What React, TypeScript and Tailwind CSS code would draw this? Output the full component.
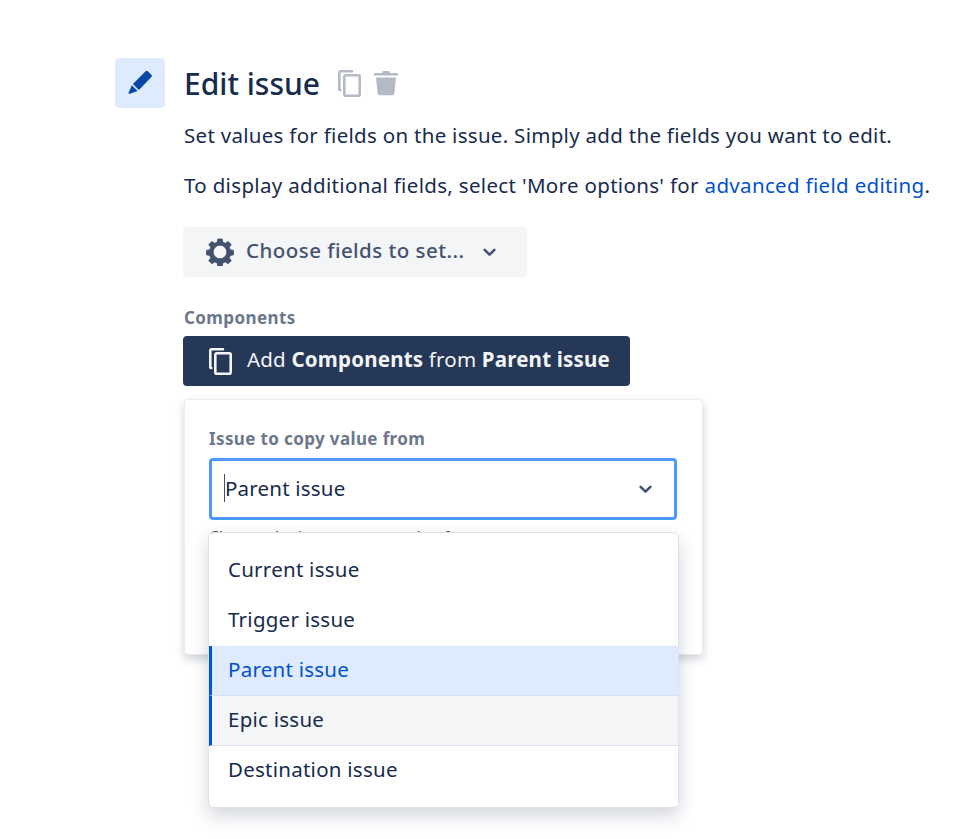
import React from "react";

const font = "font-['Noto_Sans',sans-serif]";

function CopyIcon({ className }: { className: string }) {
  return (
    <svg viewBox="0 0 23 27" className={className} fill="none" stroke="currentColor" strokeWidth="2.6">
      <path d="M2.300 20 a1 1 0 0 1 -1 -1 V2.500 a1.200 1.200 0 0 1 1.200 -1.200 H14" strokeLinecap="round" />
      <rect x="6.300" y="5.300" width="15.400" height="20.400" rx="1.500" />
    </svg>
  );
}

function Chevron({ className }: { className: string }) {
  return (
    <svg viewBox="0 0 12 8" className={className} fill="none" stroke="currentColor" strokeWidth="2.300" strokeLinecap="round" strokeLinejoin="round">
      <path d="M1.500 1.500 6 6l4.500-4.500" />
    </svg>
  );
}

function Gear({ className }: { className: string }) {
  return (
    <svg viewBox="0 0 28 28" className={className} fill="currentColor" stroke="currentColor" strokeWidth="0.8" strokeLinejoin="round">
      <path
        fillRule="evenodd"
        d="M11.800 1h4.400l0.700 3.300 2.400 1 2.800-1.900 3.100 3.100-1.900 2.800 1 2.400 3.300 0.700v4.400l-3.300 0.700-1 2.400 1.900 2.800-3.100 3.100-2.800-1.900-2.400 1-0.700 3.300h-4.400l-0.700-3.300-2.400-1-2.800 1.900-3.100-3.100 1.900-2.800-1-2.400-3.300-0.700v-4.400l3.300-0.700 1-2.400-1.900-2.800 3.100-3.100 2.800 1.900 2.400-1z M14 7.200a6.800 6.800 0 1 0 0 13.600 6.800 6.800 0 0 0 0-13.600z"
      />
    </svg>
  );
}

const options = [
  { label: "Current issue", cls: "border-l-[3px] border-transparent text-[#172b4d]" },
  { label: "Trigger issue", cls: "border-l-[3px] border-transparent text-[#172b4d]" },
  { label: "Parent issue", cls: "border-l-[3px] border-l-[#0055dd] bg-[#deebff] text-[#0052cc] border-b border-b-[#d3e1f7]" },
  { label: "Epic issue", cls: "border-l-[3px] border-l-[#0055dd] bg-[#f4f5f7] text-[#172b4d] border-b border-b-[#dfe1f0]" },
  { label: "Destination issue", cls: "border-l-[3px] border-transparent text-[#172b4d]" },
];

export default function App() {
  return (
    <div className={`${font} w-[956px] h-[839px] overflow-hidden bg-white text-[#172b4d] pt-[58px] pl-[115px] flex gap-[19px]`}>
      <div className="w-[50px] h-[50px] rounded bg-[#deebff] flex items-center justify-center shrink-0">
        <svg viewBox="0 0 28 28" className="w-[28px] h-[28px]" fill="#0747a6">
          <path d="M19.600 2.300a1.600 1.600 0 0 1 2.200 0l3.600 3.500a1.600 1.600 0 0 1 0 2.200L12.900 21l-6-6z" />
          <path d="M5.800 16.200l5.900 5.900-8 2.700c-.8.3-1.300-.3-1.100-1z" />
        </svg>
      </div>
      <div className="w-[780px] shrink-0">
        <div className="flex items-center h-[50px]">
          <h1 className="mt-[2px] text-[30px] leading-[50px] font-medium">Edit issue</h1>
          <CopyIcon className="ml-[18px] w-[23px] h-[27px] text-[#b3bac5]" />
          <svg viewBox="0 0 26 26" className="ml-[12px] w-[26px] h-[26px]" fill="#b3bac5">
            <path d="M9 2.500a1.500 1.500 0 0 1 1.500-1.500h5A1.500 1.500 0 0 1 17 2.500V3h7a1 1 0 0 1 1 1v1.500H1V4a1 1 0 0 1 1-1h7z" />
            <path d="M3 7.500h20l-1.600 16a2 2 0 0 1-2 1.800H6.600a2 2 0 0 1-2-1.800z" />
          </svg>
        </div>
        <p className="mt-[13px] text-[20.500px] tracking-[0.29px] leading-[28px] whitespace-nowrap">
          Set values for fields on the issue. Simply add the fields you want to edit.
        </p>
        <p className="mt-[22px] text-[20.500px] tracking-[0.33px] leading-[28px] whitespace-nowrap">
          To display additional fields, select 'More options' for <span className="text-[#0052cc]">advanced field editing</span>.
        </p>
        <button className="mt-[28px] ml-[-1px] w-[344px] h-[50px] rounded bg-[#f4f5f7] text-[#42526e] flex items-center pl-[23px] text-[20.500px] tracking-[0.45px] font-medium">
          <Gear className="w-[28px] h-[28px] mr-[12px]" />
          <span className="mb-[3px]">Choose fields to set...</span>
          <Chevron className="ml-[18px] w-[13px] h-[9px]" />
        </button>
        <div className="mt-[30px] text-[17px] tracking-[0.4px] leading-[22px] font-bold text-[#6b778c]">Components</div>
        <button className="mt-[7px] ml-[-1px] w-[447px] h-[50px] rounded bg-[#253858] text-[#f4f5f7] flex items-center pl-[26px] text-[20.500px] tracking-[0.2px] whitespace-nowrap">
          <CopyIcon className="w-[23px] h-[27px] mr-[15px] text-[#f4f5f7]" />
          <span className="mb-[3px]">Add <b className="font-bold">Components</b> from <b className="font-bold">Parent issue</b></span>
        </button>
        <div className="relative mt-[13px] w-[519px] h-[256px] rounded bg-white border border-[#ebecf0] shadow-[0_4px_10px_rgba(9,30,66,0.2)] px-[24px] pt-[28px]">
          <div className="text-[17px] tracking-[0.37px] leading-[22px] font-bold text-[#6b778c]">Issue to copy value from</div>
          <div className="mt-[8px] w-[468px] h-[62px] rounded bg-white border-[3px] border-[#4c9aff] flex items-center justify-between pl-[12px] pr-[22px]">
            <span className="mb-[3px] text-[20.500px] tracking-[0.2px] text-[#172b4d] border-l border-[#42526e] leading-[28px]">Parent issue</span>
            <Chevron className="w-[13px] h-[9px] text-[#42526e]" />
          </div>
          <div className="mt-[6px] text-[16px] leading-[22px] text-[#42526e] whitespace-nowrap">Choose the issue to copy value from</div>
          <div className="absolute left-[23px] top-[132px] w-[471px] h-[276px] rounded-md bg-white border border-[#dfe1e6] shadow-[0_8px_18px_rgba(9,30,66,0.18)] pt-[13px] overflow-hidden">
            {options.map((o) => (
              <div key={o.label} className={`h-[50px] flex items-center pl-[16px] pb-[3px] text-[20.500px] tracking-[0.25px] ${o.cls}`}>
                {o.label}
              </div>
            ))}
          </div>
        </div>
      </div>
    </div>
  );
}
